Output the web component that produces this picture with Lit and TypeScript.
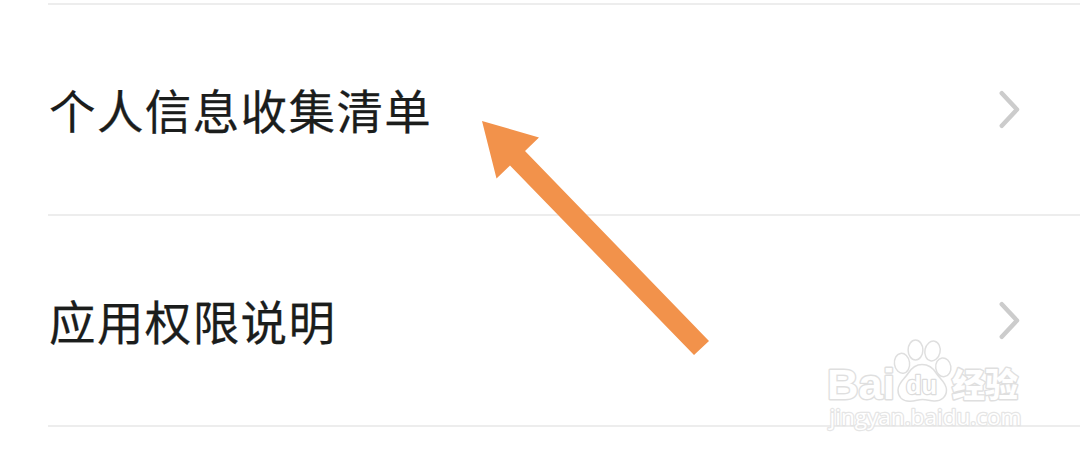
import { LitElement, css, html } from 'lit';

export class SettingRow extends LitElement {
  static properties = {
    label: { type: String }
  };

  static styles = css`
    :host {
      display: flex;
      align-items: center;
      justify-content: space-between;
      box-sizing: border-box;
      height: 211px;
      margin-left: 48px;
      padding-right: 58px;
      border-bottom: 2px solid #ededed;
    }

    .label {
      padding: 0 0 2px 1px;
      font-size: 46.5px;
      letter-spacing: 1.4px;
      line-height: 60px;
      color: #1b1d1c;
      -webkit-text-stroke: 0.25px #1b1d1c;
      white-space: nowrap;
    }

    .chevron {
      flex: none;
      width: 24px;
      height: 40px;
      fill: none;
      stroke: #cccccc;
      stroke-width: 4.5;
      stroke-linecap: round;
      stroke-linejoin: round;
    }
  `;

  declare label: string;

  constructor() {
    super();
    this.label = '';
  }

  override render() {
    return html`
      <span class="label">${this.label}</span>
      <svg class="chevron" viewBox="0 0 24 40">
        <path d="M3.8 3.2 L19 19.5 L3.8 35.8" />
      </svg>
    `;
  }
}

export class BaiduWatermark extends LitElement {
  static styles = css`
    :host {
      display: block;
      width: 210px;
      height: 110px;
    }

    svg {
      display: block;
    }

    text {
      fill: #ffffff;
      stroke: #dedede;
      stroke-width: 2.8;
      stroke-linejoin: round;
      paint-order: stroke;
    }

    .brand {
      font: bold 43px 'Liberation Sans', sans-serif;
    }

    .brand-cn {
      font: 900 33px 'Noto Sans CJK SC', sans-serif;
    }

    .domain {
      font: 500 22px 'Open Sans', sans-serif;
      stroke: #e4e4e4;
      stroke-width: 2.4;
    }

    .paw {
      fill: #ffffff;
      stroke: #dedede;
      stroke-width: 1.5;
    }

    .du {
      font: bold 25px 'Liberation Sans', sans-serif;
      stroke: #dadada;
      stroke-width: 2.4;
    }
  `;

  override render() {
    return html`
      <svg width="210" height="110" viewBox="0 0 210 110">
        <text class="brand" x="7" y="69" textLength="68" lengthAdjust="spacingAndGlyphs">Bai</text>
        <text class="brand-cn" x="132" y="67" textLength="66" lengthAdjust="spacingAndGlyphs">经验</text>
        <text class="domain" x="9.5" y="94.5" textLength="192" lengthAdjust="spacingAndGlyphs">jingyan.baidu.com</text>
        <g class="paw">
          <ellipse cx="82" cy="33.3" rx="7.6" ry="10" transform="rotate(-8 82 33.3)" />
          <ellipse cx="95.5" cy="20" rx="7.4" ry="10" />
          <ellipse cx="112.5" cy="21" rx="7.6" ry="10" transform="rotate(12 112.5 21)" />
          <ellipse cx="123.3" cy="37.3" rx="7.6" ry="9.4" transform="rotate(-8 123.3 37.3)" />
          <path
            d="M102 34.5 C110 34.5 113.5 38.5 116.5 43.5 C120 49 126.5 52.5 126.5 60 C126.5 67 121 71.3 114 71 C109.5 70.8 107 69.5 102.5 69.5 C98 69.5 95 71.5 89.5 71.3 C82 71 78 66.5 78 60 C78 52.5 84.5 49 88 43.5 C91.5 38 95 34.5 102 34.5 Z"
          />
        </g>
        <text class="du" x="86" y="64" textLength="31" lengthAdjust="spacingAndGlyphs">du</text>
      </svg>
    `;
  }
}

export class AppRoot extends LitElement {
  static styles = css`
    :host {
      display: block;
      position: relative;
      box-sizing: border-box;
      height: 455px;
      padding-top: 3px;
      overflow: hidden;
      background: #ffffff;
      font-family: 'Noto Sans CJK SC', sans-serif;
    }

    .list {
      display: flex;
      flex-direction: column;
    }

    .divider {
      height: 2px;
      margin-left: 48px;
      background: #ededed;
    }

    .pointer {
      position: absolute;
      left: 480px;
      top: 119px;
      fill: #f2924b;
    }

    .watermark {
      position: absolute;
      left: 820px;
      top: 330px;
      opacity: 0.94;
    }
  `;

  private labels = ['个人信息收集清单', '应用权限说明'];

  override render() {
    return html`
      <div class="list">
        <div class="divider"></div>
        ${this.labels.map((label) => html`<setting-row .label=${label}></setting-row>`)}
      </div>
      <svg class="pointer" width="232" height="240" viewBox="0 0 232 240">
        <path d="M2 2 L59 18.5 L45 32 L229 222 L214 236 L30 46.5 L16.5 59.5 Z" />
      </svg>
      <baidu-watermark class="watermark"></baidu-watermark>
    `;
  }
}

customElements.define('setting-row', SettingRow);
customElements.define('baidu-watermark', BaiduWatermark);
customElements.define('app-root', AppRoot);

declare global {
  interface HTMLElementTagNameMap {
    'setting-row': SettingRow;
    'baidu-watermark': BaiduWatermark;
    'app-root': AppRoot;
  }
}
